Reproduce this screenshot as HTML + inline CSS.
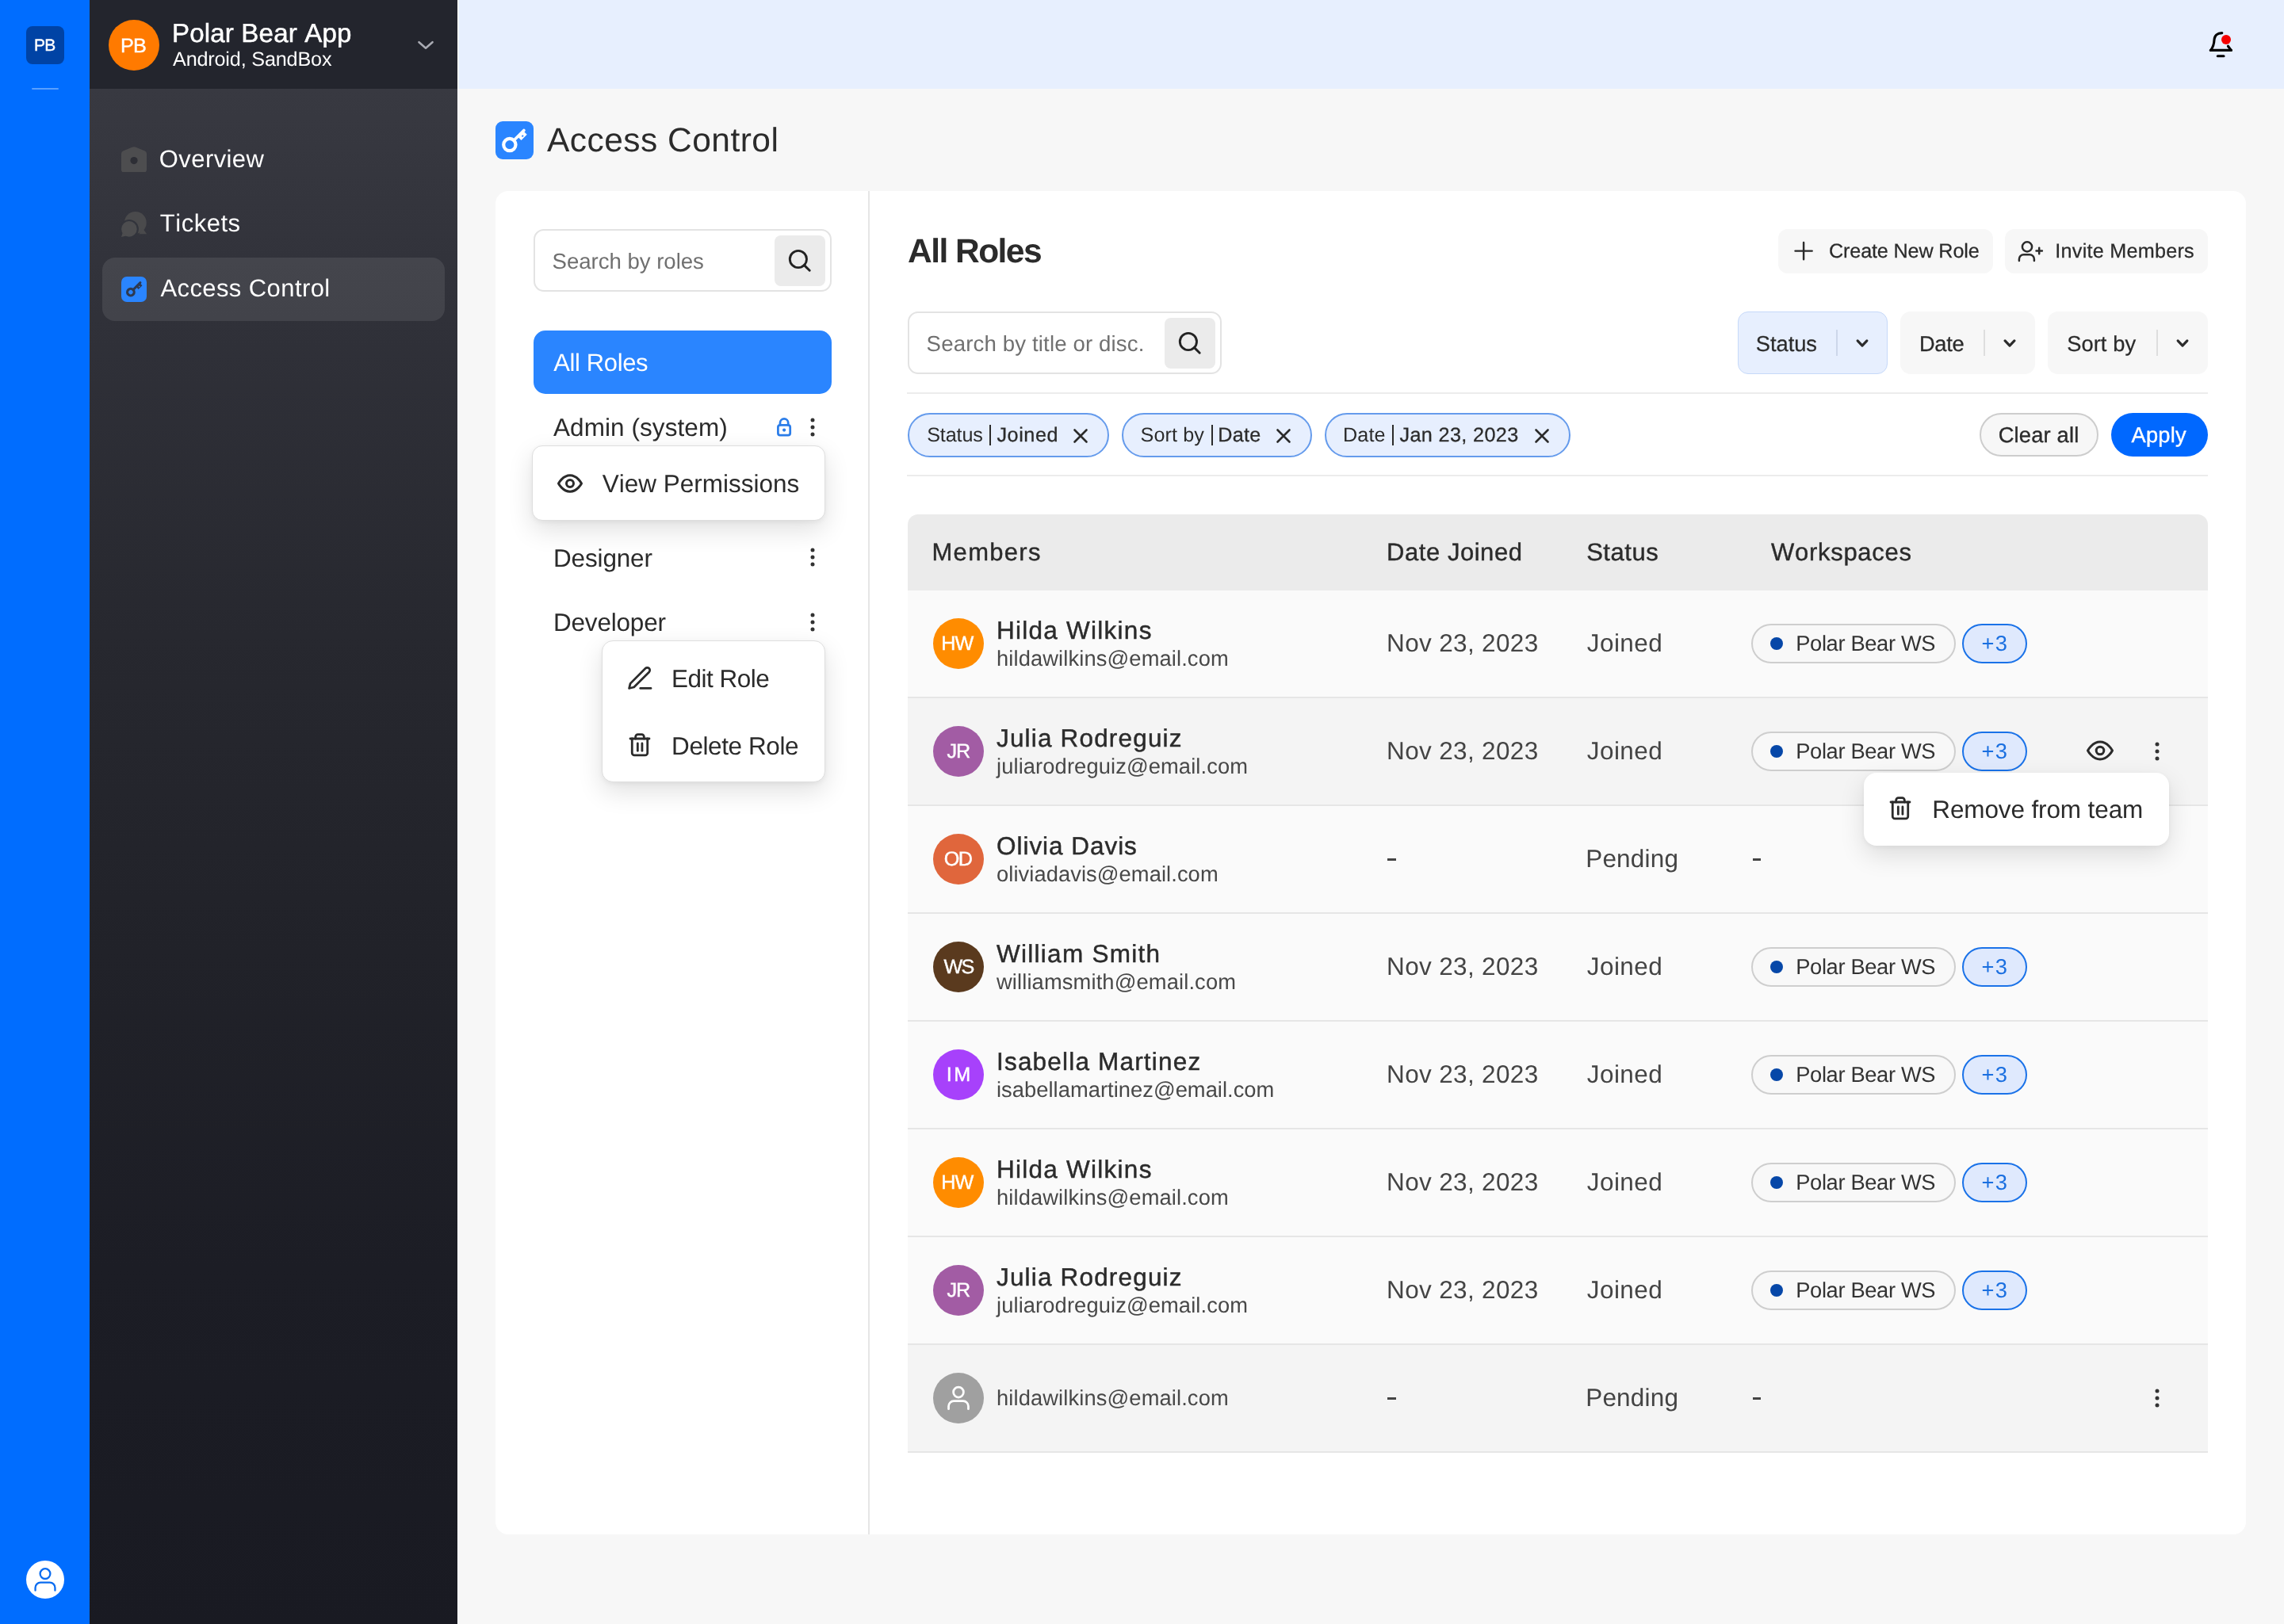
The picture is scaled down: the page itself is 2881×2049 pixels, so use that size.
<!DOCTYPE html>
<html><head><meta charset="utf-8"><title>Access Control</title>
<style>
html,body{margin:0;padding:0;}
body{width:2881px;height:2049px;position:relative;overflow:hidden;background:#f7f7f7;font-family:"Liberation Sans",sans-serif;}
.b{position:absolute;display:block;}
.t{position:absolute;white-space:nowrap;font-family:"Liberation Sans",sans-serif;font-kerning:none;text-rendering:geometricPrecision;}
#w{position:absolute;left:0;top:0;width:2881px;height:2049px;will-change:transform;}
</style></head><body>
<div id="w">
<div class="b" style="left:0px;top:0px;width:113px;height:2049px;background:#006dff;"></div>
<div class="b" style="left:33px;top:32.5px;width:48px;height:48px;background:#0043a5;border-radius:8px;"></div>
<div class="t" style="left:43.12px;top:46px;font-size:21.0px;line-height:23px;color:#fff;letter-spacing:-0.81px;-webkit-text-stroke:0.4px #fff;">PB</div>
<div class="b" style="left:40px;top:111px;width:34px;height:2px;background:rgba(255,255,255,.35);border-radius:1px;"></div>
<div class="b" style="left:33px;top:1968.5px;width:48px;height:48px;background:#fff;border-radius:24px;"></div>
<svg class="b" style="left:37px;top:1972.6px;color:#0a6cf0" width="40" height="40.0" viewBox="37 1972.6 40 40.0" fill="none" stroke="currentColor" stroke-width="2.3" stroke-linecap="round" stroke-linejoin="round"><circle cx="57" cy="1985.1999999999998" r="6.4"/><path d="M44.55 2006.3v-3.5a6.5 6.5 0 0 1 6.5-6.5h11.9a6.5 6.5 0 0 1 6.5 6.5v3.5"/></svg>
<div class="b" style="left:113px;top:0px;width:464px;height:2049px;background:linear-gradient(180deg,#383941 112px,#303139 400px,#27282f 800px,#212229 1200px,#1c1d25 1600px,#191a22 2049px);"></div>
<div class="b" style="left:113px;top:0px;width:464px;height:112px;background:#23252d;"></div>
<div class="b" style="left:137px;top:24.5px;width:64px;height:64px;background:#ff7a00;border-radius:32px;"></div>
<div class="t" style="left:151.98px;top:44px;font-size:25.2px;line-height:28px;color:#fff;letter-spacing:-0.69px;-webkit-text-stroke:0.4px #fff;">PB</div>
<div class="t" style="left:217.00px;top:24px;font-size:33.08px;line-height:37px;color:#fff;letter-spacing:0.16px;-webkit-text-stroke:0.5px #fff;">Polar Bear App</div>
<div class="t" style="left:218.00px;top:61px;font-size:25.2px;line-height:28px;color:#fff;letter-spacing:-0.17px;">Android, SandBox</div>
<svg class="b" style="left:527.2px;top:49px;color:#a9abb3" width="20.0" height="16" viewBox="527.2 49 20.0 16" fill="none" stroke="currentColor" stroke-width="2.5" stroke-linecap="round" stroke-linejoin="round"><path d="M528.7 53.2L537.2 60.8L545.7 53.2"/></svg>
<div class="b" style="left:129px;top:325px;width:432px;height:80px;background:rgba(255,255,255,.09);border-radius:16px;"></div>
<svg class="b" style="left:153px;top:184.5px" width="32" height="32.5" viewBox="0 0 32 32.5"><path d="M2.200 5.600 13.600 .800a5.500 5.500 0 0 1 4.800 0L29.800 5.600a3.800 3.800 0 0 1 2.200 3.400V29a3.500 3.500 0 0 1-3.500 3.500H3.500A3.500 3.500 0 0 1 0 29V9a3.800 3.800 0 0 1 2.200-3.400Z" fill="#4d4d4f"/><circle cx="16" cy="17.600" r="4.600" fill="#2d2e35"/></svg>
<div class="t" style="left:200.85px;top:183px;font-size:30.98px;line-height:35px;color:#fff;letter-spacing:0.42px;">Overview</div>
<svg class="b" style="left:150px;top:264px" width="40" height="38" viewBox="150 264 40 38"><defs><clipPath id="tk"><rect x="150" y="264" width="40" height="31.500"/></clipPath></defs><g clip-path="url(#tk)"><circle cx="170.800" cy="280.900" r="13.900" fill="#4a4a4c"/><path d="M180 288l5.300 7.500h-10z" fill="#4a4a4c"/></g><circle cx="162.900" cy="288.900" r="12" fill="#32343c"/><circle cx="162.900" cy="288.900" r="9.800" fill="#4d4d4f"/><path d="M154.800 293.500l-1.800 5.400 6.500-1.500z" fill="#4d4d4f"/></svg>
<div class="t" style="left:201.78px;top:264px;font-size:30.98px;line-height:35px;color:#fff;letter-spacing:0.54px;">Tickets</div>
<div class="b" style="left:153px;top:348.7px;width:32px;height:32px;background:#2a85ff;border-radius:7px"><svg width="32" height="32" viewBox="0 0 32 32" style="display:block;color:#2e3950"><g transform="translate(11.9 19.7) rotate(-45)"><circle r="4.3" fill="none" stroke="currentColor" stroke-width="3.2"/><path d="M5.1 -1.5H17.0a1.5 1.5 0 0 1 0 3.0H16.300V4.300H9.500V1.5H5.1Z" fill="currentColor"/><rect x="12.100" y="1.900" width="1.500" height="1.300" fill="#2a85ff"/></g></svg></div>
<div class="t" style="left:202.40px;top:346px;font-size:30.98px;line-height:35px;color:#fff;letter-spacing:0.43px;">Access Control</div>
<div class="b" style="left:577px;top:0px;width:2304px;height:112px;background:#e7effe;"></div>
<div class="b" style="left:577px;top:112px;width:2304px;height:1937px;background:#f7f7f7;"></div>
<div class="b" style="left:577px;top:0px;width:1px;height:2049px;background:#fff;"></div>
<svg class="b" style="left:2780px;top:34px;color:#000" width="42" height="44" viewBox="2780 34 42 44" fill="none" stroke="currentColor" stroke-width="3.1" stroke-linecap="round" stroke-linejoin="round"><path d="M2788.300 63.400H2814.400"/><path d="M2788.600 63.400C2791.500 59.500 2792.800 55 2793 50.500C2793.300 45 2797 41.600 2802.800 41.600"/><path d="M2810.400 58.200L2814.300 63.400"/><path d="M2797.300 70.800H2805"/></svg>
<div class="b" style="left:2801.9px;top:43.5px;width:12.2px;height:12.2px;background:#f50000;border-radius:6.1px;"></div>
<div class="b" style="left:625px;top:152.7px;width:48px;height:48px;background:#2a85ff;border-radius:9px"><svg width="48" height="48" viewBox="0 0 32 32" style="display:block;color:#fff"><g transform="translate(11.9 19.7) rotate(-45)"><circle r="5.1" fill="none" stroke="currentColor" stroke-width="2.8"/><path d="M5.8999999999999995 -1.25H17.0a1.25 1.25 0 0 1 0 2.5H16.300V4.300H9.500V1.25H5.8999999999999995Z" fill="currentColor"/><rect x="12.100" y="1.900" width="1.500" height="1.300" fill="#2a85ff"/></g></svg></div>
<div class="t" style="left:690.00px;top:154px;font-size:42.52px;line-height:47px;color:#2b2b2b;letter-spacing:0.46px;">Access Control</div>
<div class="b" style="left:625px;top:240.8px;width:2208px;height:1695.6px;background:#fff;border-radius:16px;"></div>
<div class="b" style="left:1095px;top:240.8px;width:2px;height:1695.6px;background:#e6e6e6;"></div>
<div class="b" style="left:673px;top:289.3px;width:376px;height:79px;background:#fff;border-radius:13px;border:2px solid #e3e3e3;box-sizing:border-box;"></div>
<div class="b" style="left:977px;top:296.7px;width:64px;height:64px;background:#ebebeb;border-radius:8px;"></div>
<svg class="b" style="left:977px;top:296.7px;color:#222" width="64" height="64.0" viewBox="977 296.7 64 64.0" fill="none" stroke="currentColor" stroke-width="2.9" stroke-linecap="round" stroke-linejoin="round"><circle cx="1006.9" cy="326.7" r="10.6"/><path d="M1014.5 334.3L1021.1999999999999 341.0"/></svg>
<div class="t" style="left:696.62px;top:314px;font-size:27.62px;line-height:31px;color:#707070;letter-spacing:-0.04px;">Search by roles</div>
<div class="b" style="left:673px;top:417px;width:376px;height:80px;background:#2a85ff;border-radius:15px;"></div>
<div class="t" style="left:698.30px;top:440px;font-size:30.98px;line-height:35px;color:#fff;letter-spacing:-0.37px;">All Roles</div>
<div class="t" style="left:698.00px;top:521px;font-size:31.5px;line-height:36px;color:#2b2b2b;letter-spacing:0.07px;">Admin (system)</div>
<svg class="b" style="left:977.9px;top:524.7px;color:#2b7de9" width="23.0" height="28.0" viewBox="977.9 524.7 23.0 28.0" fill="none" stroke="currentColor" stroke-width="2.75" stroke-linecap="round" stroke-linejoin="round"><rect x="981.3" y="536.0" width="15.3" height="12.8" rx="2.6"/><path d="M983.9 536.0V533.2a5.1 5.1 0 0 1 10.2 0V536.0"/><circle cx="989.0" cy="542.3" r="2.1" fill="#2b7de9" stroke="none"/></svg>
<svg class="b" style="left:1021px;top:524.6px;color:#333" width="8" height="28.0" viewBox="1021 524.6 8 28.0" fill="none" stroke="currentColor" stroke-width="0" stroke-linecap="round" stroke-linejoin="round"><g fill="#333" stroke="none"><circle cx="1025" cy="529.5500000000001" r="2.5"/><circle cx="1025" cy="538.6" r="2.5"/><circle cx="1025" cy="547.65" r="2.5"/></g></svg>
<div class="t" style="left:698.00px;top:686px;font-size:31.5px;line-height:36px;color:#2b2b2b;letter-spacing:-0.16px;">Designer</div>
<svg class="b" style="left:1021px;top:688.8px;color:#333" width="8" height="28.0" viewBox="1021 688.8 8 28.0" fill="none" stroke="currentColor" stroke-width="0" stroke-linecap="round" stroke-linejoin="round"><g fill="#333" stroke="none"><circle cx="1025" cy="693.75" r="2.5"/><circle cx="1025" cy="702.8" r="2.5"/><circle cx="1025" cy="711.8499999999999" r="2.5"/></g></svg>
<div class="t" style="left:698.00px;top:767px;font-size:31.5px;line-height:36px;color:#2b2b2b;letter-spacing:-0.20px;">Developer</div>
<svg class="b" style="left:1021px;top:770.6px;color:#333" width="8" height="28.0" viewBox="1021 770.6 8 28.0" fill="none" stroke="currentColor" stroke-width="0" stroke-linecap="round" stroke-linejoin="round"><g fill="#333" stroke="none"><circle cx="1025" cy="775.5500000000001" r="2.5"/><circle cx="1025" cy="784.6" r="2.5"/><circle cx="1025" cy="793.65" r="2.5"/></g></svg>
<div class="t" style="left:1145.02px;top:294px;font-size:42.52px;line-height:47px;color:#2b2b2b;letter-spacing:-1.54px;font-weight:700;">All Roles</div>
<div class="b" style="left:2243.2px;top:288.5px;width:270.4px;height:56px;background:#f7f7f7;border-radius:12px;"></div>
<svg class="b" style="left:2260px;top:302px;color:#2b2b2b" width="30" height="30" viewBox="2260 302 30 30" fill="none" stroke="currentColor" stroke-width="2.45" stroke-linecap="round" stroke-linejoin="round"><path d="M2264.500 316.600H2285.700M2275.100 306V327.200"/></svg>
<div class="t" style="left:2307.04px;top:303px;font-size:25.2px;line-height:28px;color:#2b2b2b;letter-spacing:-0.15px;-webkit-text-stroke:0.25px #2b2b2b;">Create New Role</div>
<div class="b" style="left:2529px;top:288.5px;width:256px;height:56px;background:#f7f7f7;border-radius:12px;"></div>
<svg class="b" style="left:2542px;top:300px;color:#2b2b2b" width="40" height="34" viewBox="2542 300 40 34" fill="none" stroke="currentColor" stroke-width="2.5" stroke-linecap="round" stroke-linejoin="round"><circle cx="2557" cy="311.400" r="6.100"/><path d="M2546.900 329v-2a5.700 5.700 0 0 1 5.700-5.700h7.600a5.700 5.700 0 0 1 5.700 5.700v2"/><path d="M2568.500 316.500h7.400M2572.200 312.800v7.400"/></svg>
<div class="t" style="left:2592.33px;top:303px;font-size:25.2px;line-height:28px;color:#2b2b2b;letter-spacing:0.24px;-webkit-text-stroke:0.25px #2b2b2b;">Invite Members</div>
<div class="b" style="left:1145px;top:393px;width:396px;height:79px;background:#fff;border-radius:13px;border:2px solid #e3e3e3;box-sizing:border-box;"></div>
<div class="b" style="left:1469px;top:400.7px;width:64px;height:64px;background:#ebebeb;border-radius:8px;"></div>
<svg class="b" style="left:1469px;top:400.7px;color:#222" width="64" height="64.0" viewBox="1469 400.7 64 64.0" fill="none" stroke="currentColor" stroke-width="2.9" stroke-linecap="round" stroke-linejoin="round"><circle cx="1498.9" cy="430.7" r="10.6"/><path d="M1506.5 438.3L1513.2 445.0"/></svg>
<div class="t" style="left:1168.62px;top:418px;font-size:27.62px;line-height:31px;color:#707070;letter-spacing:0.14px;">Search by title or disc.</div>
<div class="b" style="left:2191.7px;top:393px;width:189px;height:79px;background:#e7effe;border-radius:13px;border:1.5px solid #c6d9f9;box-sizing:border-box;"></div>
<div class="t" style="left:2214.84px;top:418px;font-size:27.3px;line-height:31px;color:#2b2b2b;letter-spacing:-0.05px;-webkit-text-stroke:0.25px #2b2b2b;">Status</div>
<div class="b" style="left:2316.1px;top:416.2px;width:1.8px;height:33px;background:#cdd7ea;"></div>
<svg class="b" style="left:2339.2px;top:425.1px;color:#2b2b2b" width="20.0" height="16.0" viewBox="2339.2 425.1 20.0 16.0" fill="none" stroke="currentColor" stroke-width="3.1" stroke-linecap="round" stroke-linejoin="round"><path d="M2343.2999999999997 430.0L2349.2 436.20000000000005L2355.1 430.0"/></svg>
<div class="b" style="left:2397px;top:393px;width:170px;height:79px;background:#f7f7f7;border-radius:13px;"></div>
<div class="t" style="left:2420.92px;top:418px;font-size:27.3px;line-height:31px;color:#2b2b2b;letter-spacing:-0.31px;-webkit-text-stroke:0.25px #2b2b2b;">Date</div>
<div class="b" style="left:2501.7999999999997px;top:416.2px;width:1.8px;height:33px;background:#dedede;"></div>
<svg class="b" style="left:2525.2px;top:425.1px;color:#2b2b2b" width="20.0" height="16.0" viewBox="2525.2 425.1 20.0 16.0" fill="none" stroke="currentColor" stroke-width="3.1" stroke-linecap="round" stroke-linejoin="round"><path d="M2529.2999999999997 430.0L2535.2 436.20000000000005L2541.1 430.0"/></svg>
<div class="b" style="left:2583.4px;top:393px;width:201.8px;height:79px;background:#f7f7f7;border-radius:13px;"></div>
<div class="t" style="left:2607.14px;top:418px;font-size:27.3px;line-height:31px;color:#2b2b2b;letter-spacing:0.09px;-webkit-text-stroke:0.25px #2b2b2b;">Sort by</div>
<div class="b" style="left:2720.1px;top:416.2px;width:1.8px;height:33px;background:#dedede;"></div>
<svg class="b" style="left:2743.2px;top:425.1px;color:#2b2b2b" width="20.0" height="16.0" viewBox="2743.2 425.1 20.0 16.0" fill="none" stroke="currentColor" stroke-width="3.1" stroke-linecap="round" stroke-linejoin="round"><path d="M2747.2999999999997 430.0L2753.2 436.20000000000005L2759.1 430.0"/></svg>
<div class="b" style="left:1144px;top:495.3px;width:1641px;height:2px;background:#ececec;"></div>
<div class="b" style="left:1144px;top:599.4px;width:1641px;height:2px;background:#ececec;"></div>
<div class="b" style="left:1145.1px;top:520.8px;width:253.6px;height:55.8px;background:#e7effe;border-radius:28px;border:2px solid #659bec;box-sizing:border-box;"></div>
<div class="t" style="left:1169.14px;top:535px;font-size:25.2px;line-height:28px;color:#2b2b2b;letter-spacing:-0.13px;">Status</div>
<div class="b" style="left:1248px;top:536.4px;width:2px;height:25.6px;background:#2b2b2b;"></div>
<div class="t" style="left:1257.40px;top:535px;font-size:25.2px;line-height:28px;color:#2b2b2b;letter-spacing:0.58px;-webkit-text-stroke:0.3px #2b2b2b;">Joined</div>
<svg class="b" style="left:1352px;top:538.6px;color:#2b2b2b" width="22" height="22.0" viewBox="1352 538.6 22 22.0" fill="none" stroke="currentColor" stroke-width="2.6" stroke-linecap="round" stroke-linejoin="round"><path d="M1355.5 542.1L1370.5 557.1M1370.5 542.1L1355.5 557.1"/></svg>
<div class="b" style="left:1415px;top:520.8px;width:239.5px;height:55.8px;background:#e7effe;border-radius:28px;border:2px solid #659bec;box-sizing:border-box;"></div>
<div class="t" style="left:1438.54px;top:535px;font-size:25.2px;line-height:28px;color:#2b2b2b;letter-spacing:0.10px;">Sort by</div>
<div class="b" style="left:1527.8px;top:536.4px;width:2px;height:25.6px;background:#2b2b2b;"></div>
<div class="t" style="left:1536.18px;top:535px;font-size:25.2px;line-height:28px;color:#2b2b2b;letter-spacing:0.32px;-webkit-text-stroke:0.3px #2b2b2b;">Date</div>
<svg class="b" style="left:1608px;top:538.6px;color:#2b2b2b" width="22" height="22.0" viewBox="1608 538.6 22 22.0" fill="none" stroke="currentColor" stroke-width="2.6" stroke-linecap="round" stroke-linejoin="round"><path d="M1611.5 542.1L1626.5 557.1M1626.5 542.1L1611.5 557.1"/></svg>
<div class="b" style="left:1671px;top:520.8px;width:309.5px;height:55.8px;background:#e7effe;border-radius:28px;border:2px solid #659bec;box-sizing:border-box;"></div>
<div class="t" style="left:1693.98px;top:535px;font-size:25.2px;line-height:28px;color:#2b2b2b;letter-spacing:0.15px;">Date</div>
<div class="b" style="left:1756.3px;top:536.4px;width:2px;height:25.6px;background:#2b2b2b;"></div>
<div class="t" style="left:1765.50px;top:535px;font-size:25.2px;line-height:28px;color:#2b2b2b;letter-spacing:0.37px;-webkit-text-stroke:0.3px #2b2b2b;">Jan 23, 2023</div>
<svg class="b" style="left:1934px;top:538.6px;color:#2b2b2b" width="22" height="22.0" viewBox="1934 538.6 22 22.0" fill="none" stroke="currentColor" stroke-width="2.6" stroke-linecap="round" stroke-linejoin="round"><path d="M1937.5 542.1L1952.5 557.1M1952.5 542.1L1937.5 557.1"/></svg>
<div class="b" style="left:2497.3px;top:520.6px;width:150.1px;height:55.8px;background:#f7f7f7;border-radius:28px;border:2px solid #cdcdcd;box-sizing:border-box;"></div>
<div class="t" style="left:2520.64px;top:533px;font-size:27.3px;line-height:31px;color:#2b2b2b;letter-spacing:0.19px;-webkit-text-stroke:0.35px #2b2b2b;">Clear all</div>
<div class="b" style="left:2662.8px;top:520.6px;width:122.2px;height:55.8px;background:#0068ff;border-radius:28px;"></div>
<div class="t" style="left:2688.50px;top:533px;font-size:27.3px;line-height:31px;color:#fff;letter-spacing:0.24px;-webkit-text-stroke:0.35px #fff;">Apply</div>
<div class="b" style="left:1145px;top:649px;width:1640px;height:96px;background:#ebebeb;border-radius:13px 13px 0 0;"></div>
<div class="t" style="left:1175.52px;top:679px;font-size:30.98px;line-height:35px;color:#2b2b2b;letter-spacing:1.31px;-webkit-text-stroke:0.4px #2b2b2b;">Members</div>
<div class="t" style="left:1749.12px;top:679px;font-size:30.98px;line-height:35px;color:#2b2b2b;letter-spacing:0.55px;-webkit-text-stroke:0.4px #2b2b2b;">Date Joined</div>
<div class="t" style="left:2001.15px;top:679px;font-size:30.98px;line-height:35px;color:#2b2b2b;letter-spacing:0.56px;-webkit-text-stroke:0.4px #2b2b2b;">Status</div>
<div class="t" style="left:2234.00px;top:679px;font-size:30.98px;line-height:35px;color:#2b2b2b;letter-spacing:0.73px;-webkit-text-stroke:0.4px #2b2b2b;">Workspaces</div>
<div class="b" style="left:1145px;top:745px;width:1640px;height:134px;background:#fafafa;"></div>
<div class="b" style="left:1145px;top:879px;width:1640px;height:2px;background:#e6e6e6;"></div>
<div class="b" style="left:1177px;top:779.8px;width:64px;height:64px;background:#ff8c00;border-radius:32px;"></div>
<div class="t" style="left:1187.28px;top:798px;font-size:25.2px;line-height:28px;color:#fff;letter-spacing:-1.02px;-webkit-text-stroke:0.4px #fff;">HW</div>
<div class="t" style="left:1257.00px;top:777px;font-size:31.5px;line-height:36px;color:#2b2b2b;letter-spacing:1.26px;-webkit-text-stroke:0.45px #2b2b2b;">Hilda Wilkins</div>
<div class="t" style="left:1257.00px;top:815px;font-size:27.3px;line-height:31px;color:#484848;letter-spacing:0.12px;">hildawilkins@email.com</div>
<div class="t" style="left:1749.08px;top:793px;font-size:31.5px;line-height:36px;color:#444;letter-spacing:0.34px;">Nov 23, 2023</div>
<div class="t" style="left:2001.77px;top:793px;font-size:31.5px;line-height:36px;color:#444;letter-spacing:0.44px;">Joined</div>
<div class="b" style="left:2209.2px;top:786.6px;width:258px;height:50px;background:#f8f8f8;border-radius:25.3px;border:2px solid #cecece;box-sizing:border-box;"></div>
<div class="b" style="left:2233px;top:803.5px;width:16.2px;height:16.2px;background:#0647a8;border-radius:8.1px;"></div>
<div class="t" style="left:2265.22px;top:796px;font-size:27.3px;line-height:31px;color:#333;letter-spacing:-0.35px;">Polar Bear WS</div>
<div class="b" style="left:2475px;top:786.6px;width:82px;height:50px;background:#dfe9fd;border-radius:25.3px;border:2px solid #1a72e8;box-sizing:border-box;"></div>
<div class="t" style="left:2499.44px;top:796px;font-size:27.3px;line-height:31px;color:#1a6fe0;letter-spacing:1.31px;">+3</div>
<div class="b" style="left:1145px;top:881px;width:1640px;height:134px;background:#f4f4f4;"></div>
<div class="b" style="left:1145px;top:1015px;width:1640px;height:2px;background:#e6e6e6;"></div>
<div class="b" style="left:1177px;top:915.8px;width:64px;height:64px;background:#a25ca4;border-radius:32px;"></div>
<div class="t" style="left:1194.50px;top:934px;font-size:25.2px;line-height:28px;color:#fff;letter-spacing:-0.98px;-webkit-text-stroke:0.4px #fff;">JR</div>
<div class="t" style="left:1257.00px;top:913px;font-size:31.5px;line-height:36px;color:#2b2b2b;letter-spacing:1.17px;-webkit-text-stroke:0.45px #2b2b2b;">Julia Rodreguiz</div>
<div class="t" style="left:1257.00px;top:951px;font-size:27.3px;line-height:31px;color:#484848;letter-spacing:0.11px;">juliarodreguiz@email.com</div>
<div class="t" style="left:1749.08px;top:929px;font-size:31.5px;line-height:36px;color:#444;letter-spacing:0.34px;">Nov 23, 2023</div>
<div class="t" style="left:2001.77px;top:929px;font-size:31.5px;line-height:36px;color:#444;letter-spacing:0.44px;">Joined</div>
<div class="b" style="left:2209.2px;top:922.6px;width:258px;height:50px;background:#f8f8f8;border-radius:25.3px;border:2px solid #cecece;box-sizing:border-box;"></div>
<div class="b" style="left:2233px;top:939.5px;width:16.2px;height:16.2px;background:#0647a8;border-radius:8.1px;"></div>
<div class="t" style="left:2265.22px;top:932px;font-size:27.3px;line-height:31px;color:#333;letter-spacing:-0.35px;">Polar Bear WS</div>
<div class="b" style="left:2475px;top:922.6px;width:82px;height:50px;background:#dfe9fd;border-radius:25.3px;border:2px solid #1a72e8;box-sizing:border-box;"></div>
<div class="t" style="left:2499.44px;top:932px;font-size:27.3px;line-height:31px;color:#1a6fe0;letter-spacing:1.31px;">+3</div>
<div class="b" style="left:1145px;top:1017px;width:1640px;height:134px;background:#fafafa;"></div>
<div class="b" style="left:1145px;top:1151px;width:1640px;height:2px;background:#e6e6e6;"></div>
<div class="b" style="left:1177px;top:1051.8px;width:64px;height:64px;background:#e0663c;border-radius:32px;"></div>
<div class="t" style="left:1190.74px;top:1070px;font-size:25.2px;line-height:28px;color:#fff;letter-spacing:-1.53px;-webkit-text-stroke:0.4px #fff;">OD</div>
<div class="t" style="left:1257.00px;top:1049px;font-size:31.5px;line-height:36px;color:#2b2b2b;letter-spacing:0.96px;-webkit-text-stroke:0.45px #2b2b2b;">Olivia Davis</div>
<div class="t" style="left:1257.00px;top:1087px;font-size:27.3px;line-height:31px;color:#484848;letter-spacing:0.08px;">oliviadavis@email.com</div>
<div class="b" style="left:1750.4px;top:1082.5px;width:10.7px;height:3px;background:#444;"></div>
<div class="t" style="left:2000.18px;top:1065px;font-size:31.5px;line-height:36px;color:#444;letter-spacing:0.21px;">Pending</div>
<div class="b" style="left:2210.7px;top:1082.5px;width:10.7px;height:3px;background:#444;"></div>
<div class="b" style="left:1145px;top:1153px;width:1640px;height:134px;background:#fafafa;"></div>
<div class="b" style="left:1145px;top:1287px;width:1640px;height:2px;background:#e6e6e6;"></div>
<div class="b" style="left:1177px;top:1187.8px;width:64px;height:64px;background:#5a3a1e;border-radius:32px;"></div>
<div class="t" style="left:1190.60px;top:1206px;font-size:25.2px;line-height:28px;color:#fff;letter-spacing:-1.91px;-webkit-text-stroke:0.4px #fff;">WS</div>
<div class="t" style="left:1257.00px;top:1185px;font-size:31.5px;line-height:36px;color:#2b2b2b;letter-spacing:1.28px;-webkit-text-stroke:0.45px #2b2b2b;">William Smith</div>
<div class="t" style="left:1257.00px;top:1223px;font-size:27.3px;line-height:31px;color:#484848;letter-spacing:0.13px;">williamsmith@email.com</div>
<div class="t" style="left:1749.08px;top:1201px;font-size:31.5px;line-height:36px;color:#444;letter-spacing:0.34px;">Nov 23, 2023</div>
<div class="t" style="left:2001.77px;top:1201px;font-size:31.5px;line-height:36px;color:#444;letter-spacing:0.44px;">Joined</div>
<div class="b" style="left:2209.2px;top:1194.6px;width:258px;height:50px;background:#f8f8f8;border-radius:25.3px;border:2px solid #cecece;box-sizing:border-box;"></div>
<div class="b" style="left:2233px;top:1211.5px;width:16.2px;height:16.2px;background:#0647a8;border-radius:8.1px;"></div>
<div class="t" style="left:2265.22px;top:1204px;font-size:27.3px;line-height:31px;color:#333;letter-spacing:-0.35px;">Polar Bear WS</div>
<div class="b" style="left:2475px;top:1194.6px;width:82px;height:50px;background:#dfe9fd;border-radius:25.3px;border:2px solid #1a72e8;box-sizing:border-box;"></div>
<div class="t" style="left:2499.44px;top:1204px;font-size:27.3px;line-height:31px;color:#1a6fe0;letter-spacing:1.31px;">+3</div>
<div class="b" style="left:1145px;top:1289px;width:1640px;height:134px;background:#fafafa;"></div>
<div class="b" style="left:1145px;top:1423px;width:1640px;height:2px;background:#e6e6e6;"></div>
<div class="b" style="left:1177px;top:1323.8px;width:64px;height:64px;background:#a741fb;border-radius:32px;"></div>
<div class="t" style="left:1193.83px;top:1342px;font-size:25.2px;line-height:28px;color:#fff;letter-spacing:2.41px;-webkit-text-stroke:0.4px #fff;">IM</div>
<div class="t" style="left:1257.00px;top:1321px;font-size:31.5px;line-height:36px;color:#2b2b2b;letter-spacing:1.19px;-webkit-text-stroke:0.45px #2b2b2b;">Isabella Martinez</div>
<div class="t" style="left:1257.00px;top:1359px;font-size:27.3px;line-height:31px;color:#484848;letter-spacing:0.04px;">isabellamartinez@email.com</div>
<div class="t" style="left:1749.08px;top:1337px;font-size:31.5px;line-height:36px;color:#444;letter-spacing:0.34px;">Nov 23, 2023</div>
<div class="t" style="left:2001.77px;top:1337px;font-size:31.5px;line-height:36px;color:#444;letter-spacing:0.44px;">Joined</div>
<div class="b" style="left:2209.2px;top:1330.6px;width:258px;height:50px;background:#f8f8f8;border-radius:25.3px;border:2px solid #cecece;box-sizing:border-box;"></div>
<div class="b" style="left:2233px;top:1347.5px;width:16.2px;height:16.2px;background:#0647a8;border-radius:8.1px;"></div>
<div class="t" style="left:2265.22px;top:1340px;font-size:27.3px;line-height:31px;color:#333;letter-spacing:-0.35px;">Polar Bear WS</div>
<div class="b" style="left:2475px;top:1330.6px;width:82px;height:50px;background:#dfe9fd;border-radius:25.3px;border:2px solid #1a72e8;box-sizing:border-box;"></div>
<div class="t" style="left:2499.44px;top:1340px;font-size:27.3px;line-height:31px;color:#1a6fe0;letter-spacing:1.31px;">+3</div>
<div class="b" style="left:1145px;top:1425px;width:1640px;height:134px;background:#fafafa;"></div>
<div class="b" style="left:1145px;top:1559px;width:1640px;height:2px;background:#e6e6e6;"></div>
<div class="b" style="left:1177px;top:1459.8px;width:64px;height:64px;background:#ff8c00;border-radius:32px;"></div>
<div class="t" style="left:1187.28px;top:1478px;font-size:25.2px;line-height:28px;color:#fff;letter-spacing:-1.02px;-webkit-text-stroke:0.4px #fff;">HW</div>
<div class="t" style="left:1257.00px;top:1457px;font-size:31.5px;line-height:36px;color:#2b2b2b;letter-spacing:1.26px;-webkit-text-stroke:0.45px #2b2b2b;">Hilda Wilkins</div>
<div class="t" style="left:1257.00px;top:1495px;font-size:27.3px;line-height:31px;color:#484848;letter-spacing:0.12px;">hildawilkins@email.com</div>
<div class="t" style="left:1749.08px;top:1473px;font-size:31.5px;line-height:36px;color:#444;letter-spacing:0.34px;">Nov 23, 2023</div>
<div class="t" style="left:2001.77px;top:1473px;font-size:31.5px;line-height:36px;color:#444;letter-spacing:0.44px;">Joined</div>
<div class="b" style="left:2209.2px;top:1466.6px;width:258px;height:50px;background:#f8f8f8;border-radius:25.3px;border:2px solid #cecece;box-sizing:border-box;"></div>
<div class="b" style="left:2233px;top:1483.5px;width:16.2px;height:16.2px;background:#0647a8;border-radius:8.1px;"></div>
<div class="t" style="left:2265.22px;top:1476px;font-size:27.3px;line-height:31px;color:#333;letter-spacing:-0.35px;">Polar Bear WS</div>
<div class="b" style="left:2475px;top:1466.6px;width:82px;height:50px;background:#dfe9fd;border-radius:25.3px;border:2px solid #1a72e8;box-sizing:border-box;"></div>
<div class="t" style="left:2499.44px;top:1476px;font-size:27.3px;line-height:31px;color:#1a6fe0;letter-spacing:1.31px;">+3</div>
<div class="b" style="left:1145px;top:1561px;width:1640px;height:134px;background:#fafafa;"></div>
<div class="b" style="left:1145px;top:1695px;width:1640px;height:2px;background:#e6e6e6;"></div>
<div class="b" style="left:1177px;top:1595.8px;width:64px;height:64px;background:#a25ca4;border-radius:32px;"></div>
<div class="t" style="left:1194.50px;top:1614px;font-size:25.2px;line-height:28px;color:#fff;letter-spacing:-0.98px;-webkit-text-stroke:0.4px #fff;">JR</div>
<div class="t" style="left:1257.00px;top:1593px;font-size:31.5px;line-height:36px;color:#2b2b2b;letter-spacing:1.17px;-webkit-text-stroke:0.45px #2b2b2b;">Julia Rodreguiz</div>
<div class="t" style="left:1257.00px;top:1631px;font-size:27.3px;line-height:31px;color:#484848;letter-spacing:0.11px;">juliarodreguiz@email.com</div>
<div class="t" style="left:1749.08px;top:1609px;font-size:31.5px;line-height:36px;color:#444;letter-spacing:0.34px;">Nov 23, 2023</div>
<div class="t" style="left:2001.77px;top:1609px;font-size:31.5px;line-height:36px;color:#444;letter-spacing:0.44px;">Joined</div>
<div class="b" style="left:2209.2px;top:1602.6px;width:258px;height:50px;background:#f8f8f8;border-radius:25.3px;border:2px solid #cecece;box-sizing:border-box;"></div>
<div class="b" style="left:2233px;top:1619.5px;width:16.2px;height:16.2px;background:#0647a8;border-radius:8.1px;"></div>
<div class="t" style="left:2265.22px;top:1612px;font-size:27.3px;line-height:31px;color:#333;letter-spacing:-0.35px;">Polar Bear WS</div>
<div class="b" style="left:2475px;top:1602.6px;width:82px;height:50px;background:#dfe9fd;border-radius:25.3px;border:2px solid #1a72e8;box-sizing:border-box;"></div>
<div class="t" style="left:2499.44px;top:1612px;font-size:27.3px;line-height:31px;color:#1a6fe0;letter-spacing:1.31px;">+3</div>
<div class="b" style="left:1145px;top:1697px;width:1640px;height:134px;background:#f4f4f4;"></div>
<div class="b" style="left:1145px;top:1831px;width:1640px;height:2px;background:#e6e6e6;"></div>
<div class="b" style="left:1177px;top:1731.8px;width:64px;height:64px;background:#a0a0a0;border-radius:32px;"></div>
<svg class="b" style="left:1189.1px;top:1743.7px;color:#fff" width="40.0" height="40.0" viewBox="1189.1 1743.7 40.0 40.0" fill="none" stroke="currentColor" stroke-width="2.75" stroke-linecap="round" stroke-linejoin="round"><circle cx="1209.1" cy="1756.3" r="6.4"/><path d="M1196.6499999999999 1777.4v-3.5a6.5 6.5 0 0 1 6.5-6.5h11.9a6.5 6.5 0 0 1 6.5 6.5v3.5"/></svg>
<div class="t" style="left:1257.00px;top:1748px;font-size:27.3px;line-height:31px;color:#484848;letter-spacing:0.12px;">hildawilkins@email.com</div>
<div class="b" style="left:1750.4px;top:1762.5px;width:10.7px;height:3px;background:#444;"></div>
<div class="t" style="left:2000.18px;top:1745px;font-size:31.5px;line-height:36px;color:#444;letter-spacing:0.21px;">Pending</div>
<div class="b" style="left:2210.7px;top:1762.5px;width:10.7px;height:3px;background:#444;"></div>
<svg class="b" style="left:2629.1px;top:932.4px;color:#2b2b2b" width="40.0" height="30.0" viewBox="2629.1 932.4 40.0 30.0" fill="none" stroke="currentColor" stroke-width="3" stroke-linecap="round" stroke-linejoin="round"><path d="M2633.585 947.4C2633.585 947.4 2639.256 936.486 2649.1 936.486S2664.615 947.4 2664.615 947.4S2658.944 958.314 2649.1 958.314S2633.585 947.4 2633.585 947.4Z"/><circle cx="2649.1" cy="947.4" r="4.815"/></svg>
<svg class="b" style="left:2717px;top:933.6px;color:#333" width="8" height="28.0" viewBox="2717 933.6 8 28.0" fill="none" stroke="currentColor" stroke-width="0" stroke-linecap="round" stroke-linejoin="round"><g fill="#333" stroke="none"><circle cx="2721" cy="938.5500000000001" r="2.5"/><circle cx="2721" cy="947.6" r="2.5"/><circle cx="2721" cy="956.65" r="2.5"/></g></svg>
<svg class="b" style="left:2717px;top:1750px;color:#333" width="8" height="28" viewBox="2717 1750 8 28" fill="none" stroke="currentColor" stroke-width="0" stroke-linecap="round" stroke-linejoin="round"><g fill="#333" stroke="none"><circle cx="2721" cy="1754.95" r="2.5"/><circle cx="2721" cy="1764" r="2.5"/><circle cx="2721" cy="1773.05" r="2.5"/></g></svg>
<div class="b" style="left:671px;top:561.8px;width:369.7px;height:95.4px;background:#fff;border-radius:13px;border:1.7px solid #dedede;box-sizing:border-box;box-shadow:0 12px 32px rgba(0,0,0,.12),0 2px 6px rgba(0,0,0,.05);"></div>
<svg class="b" style="left:698.9px;top:594.7px;color:#2b2b2b" width="40.0" height="30.0" viewBox="698.9 594.7 40.0 30.0" fill="none" stroke="currentColor" stroke-width="3" stroke-linecap="round" stroke-linejoin="round"><path d="M704.4 609.7C704.4 609.7 709.6999999999999 599.5 718.9 599.5S733.4 609.7 733.4 609.7S728.1 619.9000000000001 718.9 619.9000000000001S704.4 609.7 704.4 609.7Z"/><circle cx="718.9" cy="609.7" r="4.5"/></svg>
<div class="t" style="left:759.68px;top:592px;font-size:31.5px;line-height:36px;color:#2b2b2b;">View Permissions</div>
<div class="b" style="left:759px;top:808px;width:282px;height:179px;background:#fff;border-radius:14px;border:1.7px solid #dedede;box-sizing:border-box;box-shadow:0 12px 32px rgba(0,0,0,.12),0 2px 6px rgba(0,0,0,.05);"></div>
<svg class="b" style="left:788.9px;top:837.6px;color:#2b2b2b" width="36.6" height="36.6" viewBox="0 0 24 24" fill="none" stroke="currentColor" stroke-width="1.8" stroke-linecap="round" stroke-linejoin="round"><path d="M12.3 20h8.7"/><path d="M16.5 3.5a2.121 2.121 0 0 1 3 3L7 19l-4 1 1-4L16.5 3.5z"/></svg>
<div class="t" style="left:847.08px;top:838px;font-size:31.5px;line-height:36px;color:#2b2b2b;letter-spacing:-0.53px;">Edit Role</div>
<svg class="b" style="left:791.1999999999999px;top:923.6px;color:#2b2b2b" width="32" height="32" viewBox="0 0 24 24" fill="none" stroke="currentColor" stroke-width="2.1" stroke-linecap="round" stroke-linejoin="round"><path d="M3 6h18"/><path d="M19.3 6v13.5a2.2 2.2 0 0 1-2.200 2.200H6.900a2.200 2.200 0 0 1-2.200-2.200V6"/><path d="M8 6V4.200A2.200 2.200 0 0 1 10.200 2h3.600A2.200 2.200 0 0 1 16 4.200V6"/><path d="M10 10.500v7"/><path d="M14.200 10.500v7"/></svg>
<div class="t" style="left:847.08px;top:923px;font-size:31.5px;line-height:36px;color:#2b2b2b;letter-spacing:-0.41px;">Delete Role</div>
<div class="b" style="left:2350.5px;top:974.6px;width:385px;height:92.4px;background:#fff;border-radius:16px;box-shadow:0 12px 32px rgba(0,0,0,.12),0 2px 6px rgba(0,0,0,.05);"></div>
<svg class="b" style="left:2381.3px;top:1004.3000000000001px;color:#2b2b2b" width="32" height="32" viewBox="0 0 24 24" fill="none" stroke="currentColor" stroke-width="2.1" stroke-linecap="round" stroke-linejoin="round"><path d="M3 6h18"/><path d="M19.3 6v13.5a2.2 2.2 0 0 1-2.200 2.200H6.900a2.200 2.200 0 0 1-2.200-2.200V6"/><path d="M8 6V4.200A2.200 2.200 0 0 1 10.200 2h3.600A2.200 2.200 0 0 1 16 4.200V6"/><path d="M10 10.500v7"/><path d="M14.200 10.500v7"/></svg>
<div class="t" style="left:2437.28px;top:1003px;font-size:31.5px;line-height:36px;color:#2b2b2b;letter-spacing:-0.12px;">Remove from team</div>
</div>
</body></html>
